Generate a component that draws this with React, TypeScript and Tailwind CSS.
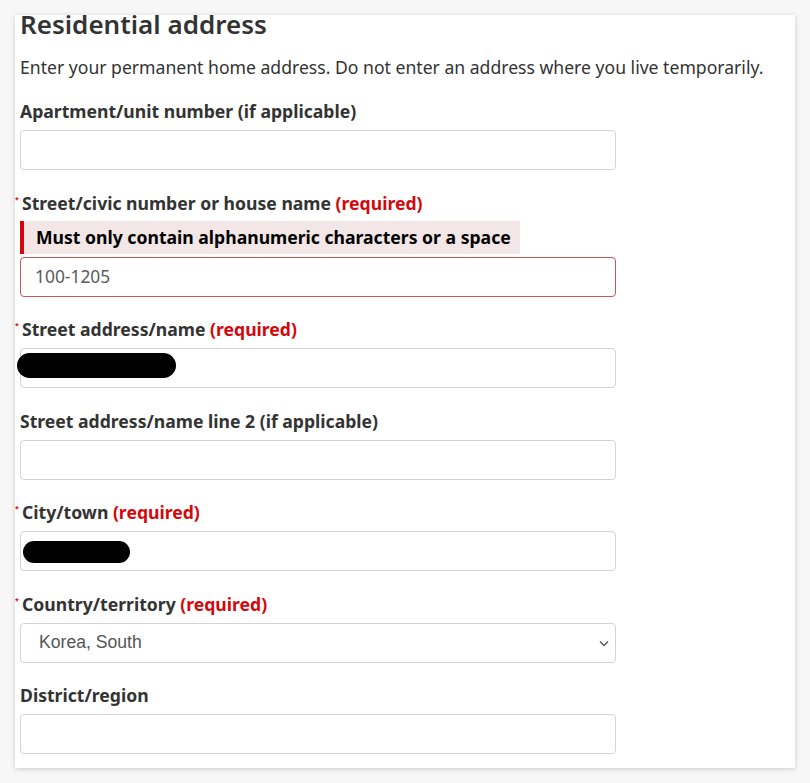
import React from "react";

const font = { fontFamily: '"Noto Sans", "Open Sans", sans-serif' };

const Star = () => (
  <span className="absolute -left-[5px] top-[6px] text-[7px] leading-none text-[#d3080c]">*</span>
);

interface FieldProps {
  label: string;
  required?: boolean;
  children: React.ReactNode;
}

const Field: React.FC<FieldProps> = ({ label, required, children }) => {
  return (
    <div className="mt-[19.5px]">
      <div
        className={`relative h-[26px] text-[17.6px] font-bold leading-[26px] text-[#333] ${
          required ? "pl-[2px]" : ""
        }`}
      >
        {required && <Star />}
        {label}
        {required && <span className="text-[#d3080c]"> (required)</span>}
      </div>
      <div className="mt-[6px]">{children}</div>
    </div>
  );
};

const TextBox: React.FC<{ value?: string; error?: boolean; redact?: "street" | "city" }> = ({
  value,
  error,
  redact,
}) => (
  <div
    className={`relative flex h-10 w-[596px] items-center rounded-[4px] border bg-white px-[14px] text-[17.4px] text-[#5a5a5a] ${
      error ? "border-[#c9585a]" : "border-[#d4d4d4]"
    }`}
  >
    {value}
    {redact === "street" && (
      <div className="absolute -left-[4px] top-[4px] h-[25px] w-[159px] rounded-full bg-black" />
    )}
    {redact === "city" && (
      <div className="absolute left-[2px] top-[9px] h-[22px] w-[107px] rounded-full bg-black" />
    )}
  </div>
);

export default function App() {
  return (
    <div className="min-h-[783px] w-[810px] bg-[#f7f7f7] pt-[15px]" style={font}>
      <div className="ml-[15px] flow-root h-[753px] w-[780px] bg-white pl-[5px] shadow-[0_1px_5px_rgba(0,0,0,0.18)]">
        <h2 className="-mt-[9px] h-[36px] text-[26px] font-semibold leading-[36px] text-[#333]">
          Residential address
        </h2>
        <p className="mt-[12px] h-[26px] text-[17.6px] leading-[26px] text-[#333]">
          Enter your permanent home address. Do not enter an address where you live temporarily.
        </p>
        <div className="-mt-[1.5px]">
          <Field label="Apartment/unit number (if applicable)">
            <TextBox />
          </Field>
          <div className="mt-[19.5px]">
            <div className="relative h-[26px] pl-[2px] text-[17.6px] font-bold leading-[26px] text-[#333]">
              <Star />
              Street/civic number or house name
              <span className="text-[#d3080c]"> (required)</span>
            </div>
            <div className="mt-[5px] flex h-[33px] w-[500px] items-center border-l-[4px] border-[#d3080c] bg-[#f3e6e6] pl-[12px] text-[17.6px] font-bold text-black">
              Must only contain alphanumeric characters or a space
            </div>
            <div className="mt-[3px]">
              <TextBox value="100-1205" error />
            </div>
          </div>
          <Field label="Street address/name" required>
            <TextBox redact="street" />
          </Field>
          <Field label="Street address/name line 2 (if applicable)">
            <TextBox />
          </Field>
          <Field label="City/town" required>
            <TextBox redact="city" />
          </Field>
          <Field label="Country/territory" required>
            <div className="relative flex h-10 w-[596px] items-center rounded-[4px] border border-[#d4d4d4] bg-white pl-[18px] text-[17.6px] text-[#555]">
              <span style={{ fontFamily: '"Liberation Sans", Arial, sans-serif' }}>Korea, South</span>
              <svg
                className="absolute right-[6px] top-[16px]"
                width="10"
                height="7"
                viewBox="0 0 10 7"
                fill="none"
              >
                <path d="M1 1.5l4 4 4-4" stroke="#555" strokeWidth="1.4" />
              </svg>
            </div>
          </Field>
          <Field label="District/region">
            <TextBox />
          </Field>
        </div>
      </div>
    </div>
  );
}
